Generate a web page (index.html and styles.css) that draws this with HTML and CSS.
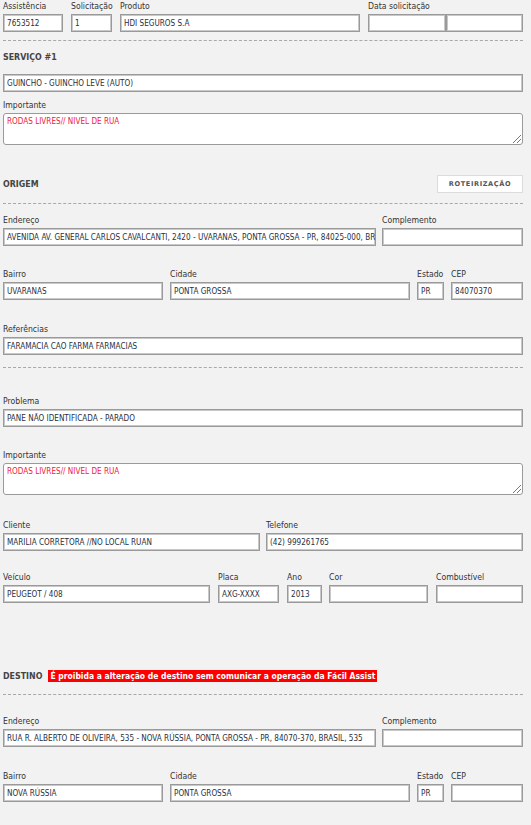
FILE: index.html
```html
<!DOCTYPE html>
<html lang="pt-BR">
<head>
<meta charset="utf-8">
<title>Serviço</title>
<link rel="stylesheet" href="styles.css">
</head>
<body>
<div class="page">
  <div class="row r1">
    <div class="field w-assist"><label>Assistência</label><div class="input">7653512</div></div>
    <div class="field w-solic"><label>Solicitação</label><div class="input">1</div></div>
    <div class="field w-prod"><label>Produto</label><div class="input">HDI SEGUROS S.A</div></div>
    <div class="field w-data"><label>Data solicitação</label><div class="pair"><div class="input"></div><div class="input"></div></div></div>
  </div>
  <hr class="dash d1">
  <h3 class="head h-serv">SERVIÇO #1</h3>
  <div class="input full i-guincho">GUINCHO - GUINCHO LEVE (AUTO)</div>
  <div class="field full r-imp1"><label>Importante</label><div class="textarea">RODAS LIVRES// NIVEL DE RUA<span class="grip"></span></div></div>

  <div class="headrow hr-origem">
    <h3 class="head">ORIGEM</h3>
    <button class="btn">ROTEIRIZAÇÃO</button>
  </div>
  <hr class="dash d2">
  <div class="row r-end1">
    <div class="field w-end"><label>Endereço</label><div class="input">AVENIDA AV. GENERAL CARLOS CAVALCANTI, 2420 - UVARANAS, PONTA GROSSA - PR, 84025-000, BR</div></div>
    <div class="field w-comp"><label>Complemento</label><div class="input"></div></div>
  </div>
  <div class="row r-bai1">
    <div class="field w-bai"><label>Bairro</label><div class="input">UVARANAS</div></div>
    <div class="field w-cid"><label>Cidade</label><div class="input">PONTA GROSSA</div></div>
    <div class="field w-est"><label>Estado</label><div class="input">PR</div></div>
    <div class="field w-cep"><label>CEP</label><div class="input">84070370</div></div>
  </div>
  <div class="field full r-ref"><label>Referências</label><div class="input">FARAMACIA CAO FARMA FARMACIAS</div></div>
  <hr class="dash d3">
  <div class="field full r-prob"><label>Problema</label><div class="input">PANE NÃO IDENTIFICADA - PARADO</div></div>
  <div class="field full r-imp2"><label>Importante</label><div class="textarea">RODAS LIVRES// NIVEL DE RUA<span class="grip"></span></div></div>
  <div class="row r-cli">
    <div class="field w-cli"><label>Cliente</label><div class="input">MARILIA CORRETORA //NO LOCAL RUAN</div></div>
    <div class="field w-tel"><label>Telefone</label><div class="input">(42) 999261765</div></div>
  </div>
  <div class="row r-vei">
    <div class="field w-vei"><label>Veículo</label><div class="input">PEUGEOT / 408</div></div>
    <div class="field w-pla"><label>Placa</label><div class="input">AXG-XXXX</div></div>
    <div class="field w-ano"><label>Ano</label><div class="input">2013</div></div>
    <div class="field w-cor"><label>Cor</label><div class="input"></div></div>
    <div class="field w-comb"><label>Combustível</label><div class="input"></div></div>
  </div>

  <div class="headrow hr-destino">
    <h3 class="head">DESTINO</h3>
    <span class="alert">É proibida a alteração de destino sem comunicar a operação da Fácil Assist</span>
  </div>
  <hr class="dash d4">
  <div class="row r-end2">
    <div class="field w-end"><label>Endereço</label><div class="input">RUA R. ALBERTO DE OLIVEIRA, 535 - NOVA RÚSSIA, PONTA GROSSA - PR, 84070-370, BRASIL, 535</div></div>
    <div class="field w-comp"><label>Complemento</label><div class="input"></div></div>
  </div>
  <div class="row r-bai2">
    <div class="field w-bai"><label>Bairro</label><div class="input">NOVA RÚSSIA</div></div>
    <div class="field w-cid"><label>Cidade</label><div class="input">PONTA GROSSA</div></div>
    <div class="field w-est"><label>Estado</label><div class="input">PR</div></div>
    <div class="field w-cep"><label>CEP</label><div class="input"></div></div>
  </div>
</div>
</body>
</html>
```
FILE: styles.css
```css
html, body {
  margin: 0;
  padding: 0;
  background: #f2f2f2;
}
body {
  font-family: "DejaVu Sans Condensed", "DejaVu Sans", sans-serif;
  color: #333;
  height: 825px;
  overflow: hidden;
}
.page {
  width: 520px;
  padding: 1px 0 0 3px;
}
.row {
  display: flex;
  align-items: flex-start;
}
.field {
  display: flex;
  flex-direction: column;
  flex: none;
}
.field.full { width: 520px; }
label {
  display: block;
  font-size: 8.6px;
  line-height: 11px;
  height: 11px;
  margin-bottom: 2px;
  color: #333;
  white-space: nowrap;
}
.input {
  box-sizing: border-box;
  height: 18px;
  background: #fff;
  border: 1px solid #9a9a9a;
  box-shadow: inset 0 0 0 1px #c8c8c8;
  font-size: 8.1px;
  line-height: 16px;
  padding: 0 3px;
  color: #2a3040;
  white-space: nowrap;
  overflow: hidden;
  text-overflow: clip;
}
.input.full { width: 520px; }
.textarea {
  position: relative;
  box-sizing: border-box;
  height: 32px;
  background: #fff;
  border: 1px solid #9a9a9a;
  border-radius: 3px;
  font-size: 8.1px;
  line-height: 11px;
  padding: 2px 3px;
  color: #f0183c;
}
.grip {
  position: absolute;
  right: 1px;
  bottom: 1px;
  width: 8px;
  height: 8px;
  background: linear-gradient(135deg, transparent 45%, #777 45%, #777 52%, transparent 52%, transparent 70%, #777 70%, #777 77%, transparent 77%);
}
.pair { display: flex; }
.pair .input { width: 78px; }
.pair .input + .input { width: 77px; }

.w-assist { width: 60px; margin-right: 8px; }
.w-solic { width: 41px; margin-right: 8px; }
.w-prod { width: 240px; margin-right: 8px; }
.w-data { width: 155px; }

.w-end { width: 373px; margin-right: 6px; }
.w-comp { width: 141px; }
.w-bai { width: 160px; margin-right: 7px; }
.w-cid { width: 240px; margin-right: 7px; }
.w-est { width: 27px; margin-right: 7px; }
.w-cep { width: 72px; }
.w-cli { width: 257px; margin-right: 6px; }
.w-tel { width: 257px; }
.w-vei { width: 207px; margin-right: 8px; }
.w-pla { width: 61px; margin-right: 8px; }
.w-ano { width: 35px; margin-right: 7px; }
.w-cor { width: 99px; margin-right: 8px; }
.w-comb { width: 87px; }

.dash {
  border: 0;
  border-top: 1px dashed #a8a8a8;
  height: 0;
  width: 520px;
  margin: 0;
}
.head {
  margin: 0;
  font-size: 8.8px;
  line-height: 14px;
  font-weight: bold;
  color: #444;
}
.headrow {
  display: flex;
  align-items: center;
  justify-content: space-between;
  height: 18px;
  width: 520px;
}
.btn {
  box-sizing: border-box;
  width: 86px;
  height: 18px;
  background: #fff;
  border: 1px solid #dcdcdc;
  font-family: "DejaVu Sans", sans-serif;
  font-size: 6.6px;
  font-weight: bold;
  letter-spacing: 0.6px;
  color: #555;
  padding: 0;
}
.hr-destino {
  justify-content: flex-start;
  height: 14px;
  gap: 6px;
}
.alert {
  background: #ff0000;
  color: #fff;
  font-weight: bold;
  font-size: 8.5px;
  line-height: 12px;
  padding: 0 2px;
  white-space: nowrap;
}

.r1 { margin-top: 0; }
.d1 { margin-top: 8px; }
.h-serv { margin-top: 9px; }
.i-guincho { margin-top: 10px; }
.r-imp1 { margin-top: 8px; }
.hr-origem { margin-top: 30px; }
.d2 { margin-top: 10px; }
.r-end1 { margin-top: 11px; }
.r-bai1 { margin-top: 23px; }
.r-ref { margin-top: 24px; }
.d3 { margin-top: 12px; }
.r-prob { margin-top: 28px; }
.r-imp2 { margin-top: 23px; }
.r-cli { margin-top: 25px; }
.r-vei { margin-top: 21px; }
.hr-destino { margin-top: 66px; }
.d4 { margin-top: 11px; }
.r-end2 { margin-top: 21px; }
.r-bai2 { margin-top: 24px; }
```
